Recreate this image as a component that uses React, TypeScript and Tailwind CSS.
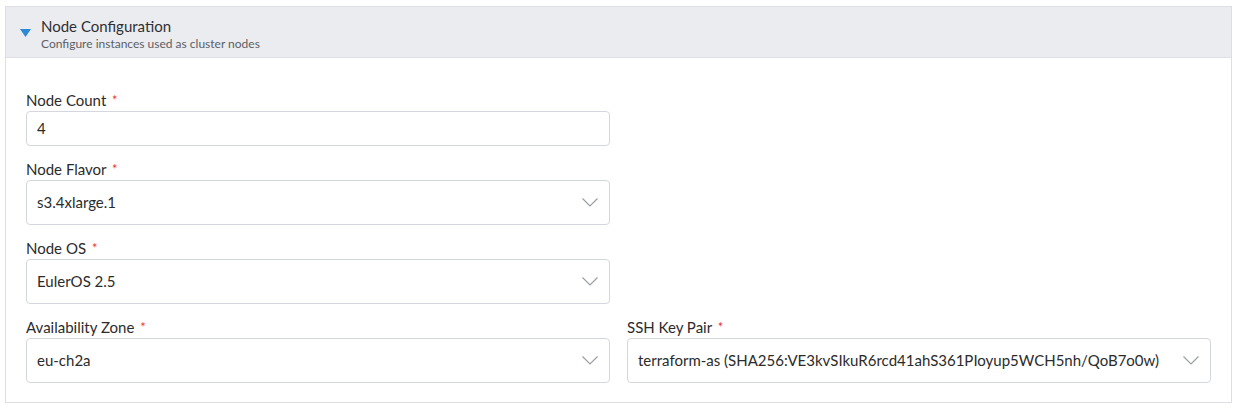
type FieldProps = {
  label: string
  value: string
  select?: boolean
  className?: string
}

function Chevron() {
  return (
    <svg width="16" height="9" viewBox="0 0 16 9" className="shrink-0">
      <polyline points="0.5,0.5 8,8 15.5,0.5" fill="none" stroke="#9b9ea6" strokeWidth="1.2" />
    </svg>
  )
}

function Field({ label, value, select = true, className = '' }: FieldProps) {
  return (
    <div className={className}>
      <label className="mb-px block text-[15px] leading-5 text-[#2b2b2b]">
        {label} <span className="ml-[2px] align-top text-[13px] text-[#e8343b]">*</span>
      </label>
      <div
        className={`flex items-center justify-between rounded-[4px] border border-[#d5d7de] bg-white pl-[10px] pr-[11px] text-[15px] text-[#2b2b2b] ${
          select ? 'h-[45px]' : 'h-[35px]'
        }`}
      >
        <span className="truncate">{value}</span>
        {select && <Chevron />}
      </div>
    </div>
  )
}

export default function App() {
  return (
    <div className="min-h-[409px] bg-white pl-[5px] pr-[8px] pt-[6px] font-['Lato',sans-serif]">
      <section className="border border-[#dedfe5]">
        <header className="flex h-[51px] items-start gap-[10px] border-b border-[#dedfe5] bg-[#ebecf0] pl-[14px] pt-[10px]">
          <svg width="11" height="8" viewBox="0 0 11 8" className="mt-[12px] shrink-0">
            <path d="M0 0 H11 L5.5 8 Z" fill="#2a8ad6" />
          </svg>
          <div>
            <h2 className="text-[15px] leading-[19px] text-[#2f3033]">Node Configuration</h2>
            <p className="text-[12px] leading-[15px] text-[#5c5f66]">Configure instances used as cluster nodes</p>
          </div>
        </header>
        <div className="grid grid-cols-2 gap-x-[17px] gap-y-[13px] px-[20px] pb-[19px] pt-[32px]">
          <Field label="Node Count" value="4" select={false} className="col-start-1" />
          <Field label="Node Flavor" value="s3.4xlarge.1" className="col-start-1" />
          <Field label="Node OS" value="EulerOS 2.5" className="col-start-1" />
          <Field label="Availability Zone" value="eu-ch2a" className="col-start-1" />
          <Field
            label="SSH Key Pair"
            value="terraform-as (SHA256:VE3kvSIkuR6rcd41ahS361PIoyup5WCH5nh/QoB7o0w)"
            className="col-start-2 row-start-4"
          />
        </div>
      </section>
    </div>
  )
}
